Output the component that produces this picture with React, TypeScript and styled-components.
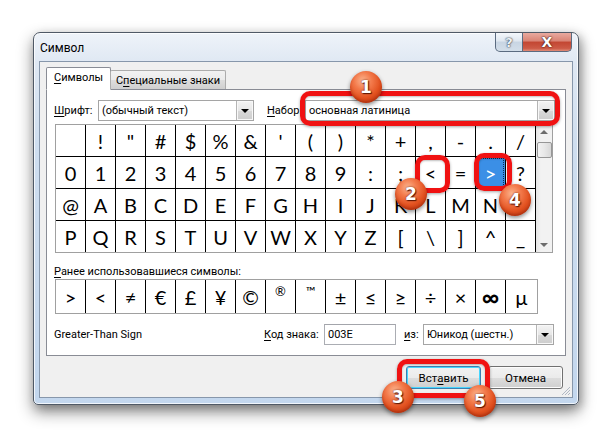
import React from "react";
import styled, { createGlobalStyle, css } from "styled-components";

const Global = createGlobalStyle`
  html, body { margin: 0; padding: 0; background: #ffffff; }
  body {
    font-family: Roboto, "Noto Sans", sans-serif;
    font-size: 11px;
    color: #000;
  }
  * { box-sizing: border-box; }
`;

const Page = styled.div`
  position: relative;
  width: 610px;
  height: 437px;
  padding: 32px 0 0 33px;
  overflow: hidden;
`;

const Window = styled.div`
  width: 546px;
  height: 373px;
  border: 1px solid #4f5966;
  border-radius: 7px 7px 5px 5px;
  background: linear-gradient(180deg, #eef3f9 0%, #dfe8f3 8%, #cfdeef 30%, #c3d7ee 100%);
  box-shadow: 0 7px 16px rgba(0, 0, 0, 0.45), 3px 3px 10px rgba(0, 0, 0, 0.2),
    inset 0 0 0 1px rgba(255, 255, 255, 0.75);
  display: flex;
  flex-direction: column;
  padding: 0 5px 6px 5px;
`;

const TitleBar = styled.div`
  height: 28px;
  display: flex;
  align-items: flex-start;
  justify-content: space-between;
`;

const Title = styled.div`
  padding: 7px 0 0 1px;
  font-size: 12px;
  line-height: 16px;
`;

const Caption = styled.div`
  display: flex;
  margin-right: 1px;
`;

const CapBtn = styled.div<{ $close?: boolean }>`
  height: 19px;
  width: ${(p) => (p.$close ? 49 : 28)}px;
  border: 1px solid #5b6b80;
  border-top: none;
  display: flex;
  align-items: center;
  justify-content: center;
  font-family: "DejaVu Sans", sans-serif;
  font-weight: bold;
  color: #fff;
  ${(p) =>
    p.$close
      ? css`
          border-left: none;
          border-radius: 0 0 5px 0;
          background: linear-gradient(180deg, #e9aa9f 0%, #d98374 45%, #c34632 50%, #cc5a46 85%, #e08c78 100%);
          font-size: 14px;
          text-shadow: 0 0 2px #3a1410, 0 0 1px #3a1410;
        `
      : css`
          border-radius: 0 0 0 5px;
          background: linear-gradient(180deg, #f4f7fb 0%, #dfe7f0 45%, #c8d5e3 50%, #d3dee9 100%);
          font-size: 13px;
          color: #eef2f7;
          text-shadow: 0 0 2px #2c3644, 0 0 1px #2c3644;
        `}
`;

const Client = styled.div`
  flex: 1;
  background: #f0f0f0;
  border: 1px solid #8797ab;
  padding: 6px 5px 0 6px;
  display: flex;
  flex-direction: column;
  position: relative;
`;

const Tabs = styled.div`
  display: flex;
  align-items: flex-end;
  height: 22px;
  margin-bottom: -1px;
  position: relative;
  z-index: 1;
`;

const Tab = styled.div<{ $active?: boolean; $w: number }>`
  width: ${(p) => p.$w}px;
  display: flex;
  align-items: center;
  justify-content: center;
  white-space: nowrap;
  border: 1px solid ${(p) => (p.$active ? "#898c95" : "#acacac")};
  border-radius: 2px 2px 0 0;
  ${(p) =>
    p.$active
      ? css`
          height: 23px;
          background: #ffffff;
          border-bottom-color: #ffffff;
          padding-bottom: 2px;
        `
      : css`
          height: 19px;
          margin-bottom: 1px;
          margin-left: -1px;
          background: linear-gradient(180deg, #f2f2f2 0%, #ebebeb 50%, #dddddd 51%, #cfcfcf 100%);
          border-bottom: none;
        `}
`;

const U = styled.span`
  text-decoration: underline;
  text-underline-offset: 2px;
`;

const Panel = styled.div`
  width: 520px;
  height: 267px;
  background: #ffffff;
  border: 1px solid #898c95;
  padding: 10px 0 0 7px;
  display: flex;
  flex-direction: column;
`;

const Row = styled.div<{ $mt?: number }>`
  display: flex;
  align-items: center;
  margin-top: ${(p) => p.$mt ?? 0}px;
`;

const Label = styled.div<{ $w: number; $ml?: number }>`
  width: ${(p) => p.$w}px;
  margin-left: ${(p) => p.$ml ?? 0}px;
  white-space: nowrap;
`;

const Combo = styled.div<{ $w: number }>`
  width: ${(p) => p.$w}px;
  height: 21px;
  border: 1px solid #a5a5a5;
  background: #fff;
  display: flex;
  align-items: center;
`;

const ComboText = styled.div`
  flex: 1;
  padding-left: 3px;
  white-space: nowrap;
  overflow: hidden;
`;

const DropBtn = styled.div`
  width: 17px;
  height: 19px;
  border-left: 1px solid #b5b5b5;
  background: linear-gradient(180deg, #f3f3f3 0%, #e7e7e7 50%, #d9d9d9 51%, #cdcdcd 100%);
  box-shadow: inset 0 0 0 1px #f8f8f8;
  display: flex;
  align-items: center;
  justify-content: center;
  &::after {
    content: "";
    border-left: 4px solid transparent;
    border-right: 4px solid transparent;
    border-top: 4px solid #000;
  }
`;

const TextInput = styled.div<{ $w: number }>`
  width: ${(p) => p.$w}px;
  height: 21px;
  border: 1px solid #abadb3;
  border-top-color: #a3a5ab;
  background: #fff;
  padding-left: 3px;
  display: flex;
  align-items: center;
`;

const CharBox = styled.div`
  display: flex;
  margin-left: 1px;
  border: 1px solid #a0a0a0;
  align-self: flex-start;
`;

const CharGrid = styled.div<{ $cols: string; $rowH: number }>`
  display: grid;
  grid-template-columns: ${(p) => p.$cols};
  grid-auto-rows: ${(p) => p.$rowH}px;
  gap: 1px;
  background: #000;
`;

const Cell = styled.div<{ $sel?: boolean; $small?: boolean; $big?: boolean }>`
  display: flex;
  align-items: center;
  justify-content: center;
  background: ${(p) => (p.$sel ? "#3b8fe6" : "#ffffff")};
  color: ${(p) => (p.$sel ? "#ffffff" : "#000000")};
  font-family: Lato, "Open Sans", sans-serif;
  font-size: ${(p) => (p.$small ? 13 : p.$big ? 24 : 20)}px;
  font-weight: ${(p) => (p.$big ? 700 : 400)};
  line-height: 1;
  padding-bottom: ${(p) => (p.$small ? 10 : 0)}px;
  ${(p) =>
    p.$sel &&
    css`
      outline: 1px dotted #0b2a50;
      outline-offset: -2px;
    `}
`;

const Scroll = styled.div`
  width: 17px;
  border-left: 1px solid #000;
  background: linear-gradient(90deg, #e6e6e6 0%, #f2f2f2 30%, #f2f2f2 100%);
  display: flex;
  flex-direction: column;
  align-items: center;
  padding: 5px 0;
`;

const Arrow = styled.div<{ $down?: boolean }>`
  width: 0;
  height: 0;
  border-left: 4px solid transparent;
  border-right: 4px solid transparent;
  ${(p) =>
    p.$down
      ? css`border-top: 4px solid #6d6d6d; margin-top: auto;`
      : css`border-bottom: 4px solid #6d6d6d;`}
`;

const Thumb = styled.div`
  width: 15px;
  height: 16px;
  margin-top: 8px;
  border: 1px solid #979797;
  border-radius: 2px;
  background: linear-gradient(90deg, #f3f3f3 0%, #e8e8e8 50%, #d8d8d8 100%);
`;

const ButtonsRow = styled.div`
  display: flex;
  justify-content: flex-end;
  gap: 7px;
  margin-top: 10px;
  padding-right: 4px;
`;

const Button = styled.div<{ $default?: boolean }>`
  width: 75px;
  height: 23px;
  border: 1px solid ${(p) => (p.$default ? "#3c7fb1" : "#707070")};
  border-radius: 3px;
  background: linear-gradient(180deg, #f2f2f2 0%, #ebebeb 50%, #dddddd 51%, #cfcfcf 100%);
  box-shadow: inset 0 0 0 1px ${(p) => (p.$default ? "#48d5fd" : "#fcfcfc")};
  display: flex;
  align-items: center;
  justify-content: center;
  font-size: 11.5px;
`;

const Grip = styled.svg`
  position: absolute;
  right: 1px;
  bottom: 1px;
`;

const Highlight = styled.div<{ $x: number; $y: number; $w: number; $h: number }>`
  position: absolute;
  left: ${(p) => p.$x}px;
  top: ${(p) => p.$y}px;
  width: ${(p) => p.$w}px;
  height: ${(p) => p.$h}px;
  border: 5px solid #f01212;
  border-radius: 10px;
  box-shadow: 0 1px 3px rgba(0, 0, 0, 0.35), inset 0 1px 2px rgba(0, 0, 0, 0.25);
`;

const Ball = styled.div<{ $x: number; $y: number }>`
  position: absolute;
  left: ${(p) => p.$x - 16}px;
  top: ${(p) => p.$y - 16}px;
  width: 32px;
  height: 32px;
  border-radius: 50%;
  background: radial-gradient(circle at 40% 30%, #fbb48e 0%, #f37a4b 30%, #e2511f 60%, #b8320f 100%);
  box-shadow: 0 2px 4px rgba(0, 0, 0, 0.45), inset 0 -2px 3px rgba(120, 20, 0, 0.4);
  display: flex;
  align-items: center;
  justify-content: center;
  color: #fff;
  font-family: "DejaVu Sans", sans-serif;
  font-weight: bold;
  font-size: 17px;
  text-shadow: 0 0 2px #6a1a05, 1px 1px 1px #5a1500;
`;

const rows = [
  [" ", "!", '"', "#", "$", "%", "&", "'", "(", ")", "*", "+", ",", "-", ".", "/"],
  ["0", "1", "2", "3", "4", "5", "6", "7", "8", "9", ":", ";", "<", "=", ">", "?"],
  ["@", "A", "B", "C", "D", "E", "F", "G", "H", "I", "J", "K", "L", "M", "N", "O"],
  ["P", "Q", "R", "S", "T", "U", "V", "W", "X", "Y", "Z", "[", "\\", "]", "^", "_"],
];

const recent = [">", "<", "≠", "€", "£", "¥", "©", "®", "™", "±", "≤", "≥", "÷", "×", "∞", "µ"];

export default function App() {
  return (
    <>
      <Global />
      <Page>
        <Window>
          <TitleBar>
            <Title>Символ</Title>
            <Caption>
              <CapBtn>?</CapBtn>
              <CapBtn $close>X</CapBtn>
            </Caption>
          </TitleBar>
          <Client>
            <Tabs>
              <Tab $active $w={65}>
                <span>
                  <U>С</U>имволы
                </span>
              </Tab>
              <Tab $w={116}>
                <span>
                  С<U>п</U>ециальные знаки
                </span>
              </Tab>
            </Tabs>
            <Panel>
              <Row>
                <Label $w={44}>
                  <U>Ш</U>рифт:
                </Label>
                <Combo $w={156}>
                  <ComboText>(обычный текст)</ComboText>
                  <DropBtn />
                </Combo>
                <Label $w={38} $ml={13}>
                  <U>Н</U>абор:
                </Label>
                <Combo $w={250}>
                  <ComboText>основная латиница</ComboText>
                  <DropBtn />
                </Combo>
              </Row>
              <Row $mt={3}>
                <CharBox>
                  <CharGrid $cols="repeat(16, 29px)" $rowH={31}>
                    {rows.map((r, ri) =>
                      r.map((c, ci) => (
                        <Cell key={`${ri}-${ci}`} $sel={ri === 1 && ci === 14}>
                          {c}
                        </Cell>
                      ))
                    )}
                  </CharGrid>
                  <Scroll>
                    <Arrow />
                    <Thumb />
                    <Arrow $down />
                  </Scroll>
                </CharBox>
              </Row>
              <Row $mt={12}>
                <Label $w={300}>
                  <U>Р</U>анее использовавшиеся символы:
                </Label>
              </Row>
              <Row $mt={1}>
                <CharBox>
                  <CharGrid $cols="repeat(15, 29px) 31px" $rowH={33}>
                    {recent.map((c, i) => (
                      <Cell key={i} $small={i === 7 || i === 8} $big={i === 14}>
                        {c}
                      </Cell>
                    ))}
                  </CharGrid>
                </CharBox>
              </Row>
              <Row $mt={10}>
                <Label $w={210}>Greater-Than Sign</Label>
                <Label $w={60}>
                  <U>К</U>од знака:
                </Label>
                <TextInput $w={72}>003E</TextInput>
                <Label $w={19} $ml={8}>
                  <U>и</U>з:
                </Label>
                <Combo $w={131}>
                  <ComboText>Юникод (шестн.)</ComboText>
                  <DropBtn />
                </Combo>
              </Row>
            </Panel>
            <ButtonsRow>
              <Button $default>
                <span>
                  Вст<U>а</U>вить
                </span>
              </Button>
              <Button>Отмена</Button>
            </ButtonsRow>
            <Grip width="11" height="11" viewBox="0 0 11 11">
              <g stroke="#b0b8c4" strokeWidth="1">
                <line x1="10" y1="2" x2="2" y2="10" />
                <line x1="10" y1="5" x2="5" y2="10" />
                <line x1="10" y1="8" x2="8" y2="10" />
              </g>
            </Grip>
          </Client>
        </Window>

        <Highlight $x={300} $y={91} $w={260} $h={35} />
        <Highlight $x={415} $y={155} $w={35} $h={38} />
        <Highlight $x={474} $y={153} $w={38} $h={38} />
        <Highlight $x={397} $y={359} $w={93} $h={39} />

        <Ball $x={366} $y={87}>1</Ball>
        <Ball $x={411} $y={194}>2</Ball>
        <Ball $x={398} $y={397}>3</Ball>
        <Ball $x={515} $y={200}>4</Ball>
        <Ball $x={480} $y={401}>5</Ball>
      </Page>
    </>
  );
}
